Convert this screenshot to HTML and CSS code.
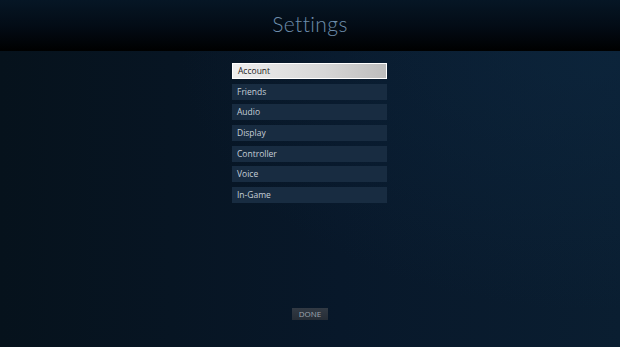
FILE: index.html
```html
<!DOCTYPE html>
<html>
<head>
<meta charset="utf-8">
<link rel="stylesheet" href="styles.css">
</head>
<body>
<div class="screen">
  <header class="header"><h1 class="title">Settings</h1></header>
  <main class="main">
    <ul class="menu">
      <li class="item active">Account</li>
      <li class="item">Friends</li>
      <li class="item">Audio</li>
      <li class="item">Display</li>
      <li class="item">Controller</li>
      <li class="item">Voice</li>
      <li class="item">In-Game</li>
    </ul>
    <div class="footer"><button class="done">DONE</button></div>
  </main>
</div>
</body>
</html>
```
FILE: styles.css
```css
html, body { margin: 0; padding: 0; }
body { width: 620px; height: 347px; overflow: hidden; background: #06121d; font-family: "Open Sans", "DejaVu Sans", sans-serif; }
.screen { width: 620px; height: 347px; display: flex; flex-direction: column; }
.header {
  height: 51px; flex: none;
  background: linear-gradient(180deg, #061625 0%, #030c16 50%, #000 100%);
  display: flex; justify-content: center; align-items: flex-start;
}
.title {
  margin: 12px 0 0; font-family: "Lato", "Open Sans", sans-serif; font-weight: 300;
  font-size: 21px; line-height: 24px; color: #6e8dab; letter-spacing: 0.4px;
}
.main {
  flex: 1; display: flex; flex-direction: column; align-items: center;
  background:
    radial-gradient(ellipse 420px 260px at 600px 0px, rgba(14,42,68,0.5), rgba(14,42,68,0) 100%),
    linear-gradient(90deg, #06121c 0%, #08182a 55%, #0a1e31 100%);
}
.menu { list-style: none; margin: 12px 0 0 -1px; padding: 0; width: 155px; display: flex; flex-direction: column; gap: 4.7px; }
.item {
  height: 16px; box-sizing: border-box; padding-left: 5px;
  background: #182c41; color: #c6cfd8; font-size: 8.5px; line-height: 16px;
}
.active {
  background: linear-gradient(90deg, #eeeeee 0%, #d6d6d6 60%, #bdbdbd 100%);
  border: 1.5px solid #ffffff; color: #222; line-height: 13px; padding-left: 5px;
}
.footer { margin-top: auto; margin-bottom: 25px; }
.done {
  width: 36px; height: 12px; padding: 0; border: none; margin-left: 0;
  background: linear-gradient(180deg, #323a44, #262d36); color: #9ea6af;
  font-family: "Open Sans", sans-serif; font-size: 8px; line-height: 12px;
}
```
